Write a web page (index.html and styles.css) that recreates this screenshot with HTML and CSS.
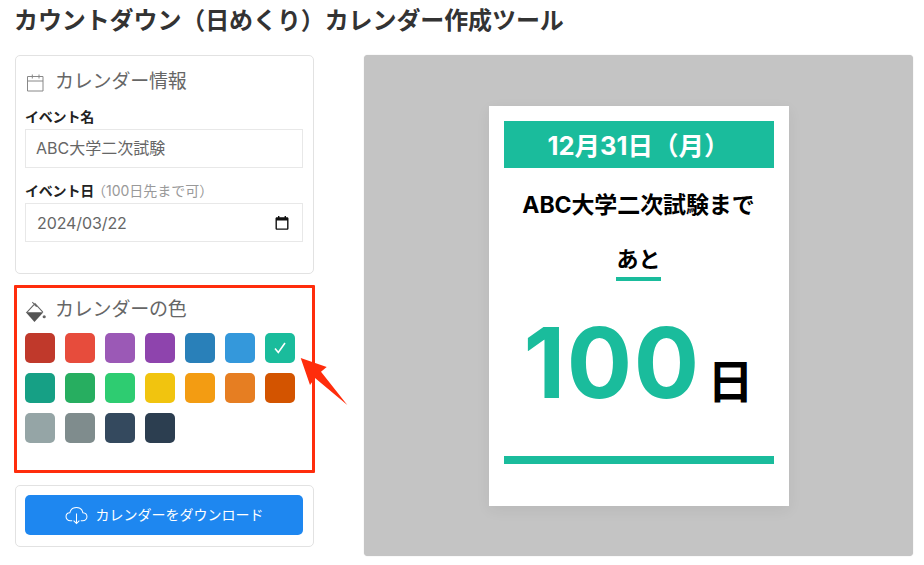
FILE: index.html
```html
<!DOCTYPE html>
<html lang="ja">
<head>
<meta charset="utf-8">
<title>カウントダウン（日めくり）カレンダー作成ツール</title>
<link rel="stylesheet" href="styles.css">
</head>
<body>
<h1 class="title">カウントダウン（日めくり）カレンダー作成ツール</h1>
<main class="layout">
  <div class="side">
    <section class="card info">
      <h2 class="card-head">
        <svg class="head-icon" viewBox="0 0 20 20" fill="none" stroke="#888" stroke-width="1"><path d="M2.500 4.500h15.500v14.500h-15.500zM2.500 9h15.500M7.300 2.500v4M14 2.500v4"/></svg>
        カレンダー情報
      </h2>
      <label class="label" for="ev">イベント名</label>
      <input class="field name" id="ev" type="text" value="ABC大学二次試験">
      <div class="label second">イベント日<span class="hint">（100日先まで可）</span></div>
      <div class="field date">
        <span>2024/03/22</span>
        <svg class="date-icon" viewBox="0 0 14 14"><path fill="#111" fill-rule="evenodd" d="M3 0h1.400v1.300h5.200V0H11v1.300h1.200c.7 0 1.300.6 1.300 1.300v9.800c0 .7-.6 1.300-1.300 1.300H1.800c-.7 0-1.300-.6-1.300-1.300V2.600c0-.7.6-1.300 1.300-1.300H3zM1.900 4.600v7.900h10.200V4.600z"/></svg>
      </div>
    </section>
    <section class="card colors">
      <h2 class="card-head">
        <svg class="head-icon bucket" viewBox="0 0 20 20"><path fill="none" stroke="#666" stroke-width="1" d="M1.500 11L9.500 2.500l7.500 8M7 1l4 4.500"/><path fill="#555" d="M.8 10.800h16.700L9 20z"/><circle cx="18.300" cy="15" r="1.500" fill="#666"/></svg>
        カレンダーの色
      </h2>
      <div class="swatches">
        <span class="swatch c1"></span><span class="swatch c2"></span><span class="swatch c3"></span><span class="swatch c4"></span><span class="swatch c5"></span><span class="swatch c6"></span>
        <span class="swatch c7"><svg class="check" viewBox="0 0 14 14" fill="none" stroke="#fff" stroke-width="1.600"><path d="M2 7.500l3.300 4L12 2"/></svg></span>
        <span class="swatch c8"></span><span class="swatch c9"></span><span class="swatch c10"></span><span class="swatch c11"></span><span class="swatch c12"></span><span class="swatch c13"></span><span class="swatch c14"></span>
        <span class="swatch c15"></span><span class="swatch c16"></span><span class="swatch c17"></span><span class="swatch c18"></span>
      </div>
      <svg class="arrow" viewBox="0 0 50 52"><polygon fill="#ff2d0c" points="1.700,1 27.700,10 22,14.700 48.300,48 16,21 11,28"/></svg>
    </section>
    <section class="card action">
      <button class="download" type="button">
        <svg class="cloud" viewBox="0 0 24 20" fill="none" stroke="#fff" stroke-width="1.100"><path d="M7.500 15.500H5.500C3 15.500 1 13.700 1 11.300c0-2.200 1.700-4 3.900-4.100C5.600 4 8.500 1.500 12 1.500c3.400 0 6 2.300 6.700 5.500 2.500.2 4.300 2 4.300 4.300 0 2.400-2 4.200-4.500 4.200h-2M12 8v10.500M9 15.500l3 3 3-3"/></svg>
        カレンダーをダウンロード
      </button>
    </section>
  </div>
  <div class="preview">
    <article class="sheet">
      <div class="sheet-date">12月31日（月）</div>
      <p class="sheet-event">ABC大学二次試験まで</p>
      <p class="sheet-left"><span>あと</span></p>
      <p class="sheet-count"><b>100</b><span>日</span></p>
      <div class="sheet-rule"></div>
    </article>
  </div>
</main>
</body>
</html>
```

FILE: styles.css
```css
*, *::before { box-sizing: border-box; }
html, body { margin: 0; height: 100%; }
body {
  width: 924px;
  height: 565px;
  overflow: hidden;
  background: #fff;
  padding: 0 11px 9px 15px;
  font-family: "Inter", "Liberation Sans", "Noto Sans CJK JP", sans-serif;
  color: #333;
  display: flex;
  flex-direction: column;
}
.title {
  margin: 0;
  height: 55px;
  padding-top: 4px;
  font-size: 24px;
  line-height: 34px;
  font-weight: 700;
  color: #333;
  letter-spacing: -.1px;
  text-indent: -1px;
}
.layout { flex: 1; display: flex; gap: 50px; min-height: 0; }
.side { width: 299px; display: flex; flex-direction: column; gap: 12px; }
.card {
  border: 1px solid #e2e2e2;
  border-radius: 5px;
  padding: 9px 10px 9px 9px;
  background: #fff;
}
.info { height: 219px; padding-top: 10px; }
.card-head {
  margin: 0;
  display: flex;
  align-items: center;
  gap: 10px;
  font-size: 19px;
  line-height: 32px;
  font-weight: 400;
  color: #666;
  height: 32px;
  letter-spacing: -.2px;
}
.head-icon { width: 20px; height: 20px; flex: none; }
.bucket { width: 21px; height: 21px; margin-right: -1px; margin-top: 2px; }
.label {
  display: block;
  margin-top: 9px;
  font-size: 14px;
  line-height: 20px;
  font-weight: 700;
  color: #222;
  letter-spacing: -.2px;
}
.label.second { margin-top: 13px; }
.hint { font-weight: 400; color: #999; font-size: 14px; letter-spacing: 0; margin-left: -2px; }
.field {
  display: flex;
  align-items: center;
  justify-content: space-between;
  width: 100%;
  height: 39px;
  margin-top: 2px;
  padding: 0 13px 0 10px;
  border: 1px solid #e8e8e8;
  border-radius: 0;
  background: #fff;
  font: inherit;
  font-size: 16px;
  color: #666;
  outline: none;
}
.name { padding-bottom: 3px; }
.date { padding-left: 11px; letter-spacing: -.1px; }
.date-icon { width: 14px; height: 14px; flex: none; }
.colors { position: relative; height: 187px; border: 0; padding: 8px 10px; }
.colors::before {
  content: "";
  position: absolute;
  left: -1px;
  top: -1px;
  width: 301px;
  height: 188px;
  border: 3px solid #ff2d0c;
  border-radius: 1px;
}
.swatches {
  display: grid;
  grid-template-columns: repeat(7, 30px);
  grid-auto-rows: 30px;
  gap: 10px;
  margin-top: 7px;
}
.swatch {
  border-radius: 5px;
  display: flex;
  align-items: center;
  justify-content: center;
}
.check { width: 14px; height: 14px; }
.c1 { background: #c0392b; } .c2 { background: #e74c3c; } .c3 { background: #9b59b6; }
.c4 { background: #8e44ad; } .c5 { background: #2980b9; } .c6 { background: #3498db; }
.c7 { background: #1abc9c; } .c8 { background: #16a085; } .c9 { background: #27ae60; }
.c10 { background: #2ecc71; } .c11 { background: #f1c40f; } .c12 { background: #f39c12; }
.c13 { background: #e67e22; } .c14 { background: #d35400; } .c15 { background: #95a5a6; }
.c16 { background: #7f8c8d; } .c17 { background: #34495e; } .c18 { background: #2c3e50; }
.arrow { position: absolute; left: 284px; top: 71px; width: 50px; height: 52px; }
.action { height: 62px; }
.download {
  width: 100%;
  height: 40px;
  border: 0;
  border-radius: 5px;
  background: #1e87f0;
  color: #fff;
  font: inherit;
  font-size: 14px;
  display: flex;
  align-items: center;
  justify-content: center;
  gap: 8px;
  padding: 0 0 2px;
}
.cloud { width: 23px; height: 19px; flex: none; margin-top: 3px; }
.preview {
  flex: 1;
  background: #c4c4c4;
  border-radius: 4px;
  box-shadow: 0 0 1px rgba(0,0,0,.25);
  display: flex;
  align-items: center;
  justify-content: center;
}
.sheet {
  width: 300px;
  height: 400px;
  padding: 15px;
  background: #fff;
  box-shadow: 0 4px 14px rgba(0,0,0,.06);
  display: flex;
  flex-direction: column;
  align-items: center;
  color: #000;
  font-weight: 700;
}
.sheet p { margin: 0; }
.sheet-date {
  width: 100%;
  height: 47px;
  background: #1abc9c;
  color: #fff;
  font-size: 25.500px;
  line-height: 49px;
  text-align: center;
}
.sheet .sheet-event { font-size: 23px; line-height: 32px; margin-top: 21px; letter-spacing: -.1px; }
.sheet .sheet-left { margin-top: 22px; font-size: 22px; line-height: 32px; }
.sheet-left span { display: block; padding-bottom: 2px; border-bottom: 4px solid #1abc9c; }
.sheet .sheet-count { margin-top: 27px; display: flex; align-items: baseline; height: 110px; line-height: 110px; }
.sheet-count b { font-size: 97px; color: #1abc9c; font-weight: 700; letter-spacing: 1.500px; }
.sheet-count span { font-size: 46px; margin-left: 7px; }
.sheet-rule { width: 100%; height: 8px; background: #1abc9c; margin-top: 38px; }
```
